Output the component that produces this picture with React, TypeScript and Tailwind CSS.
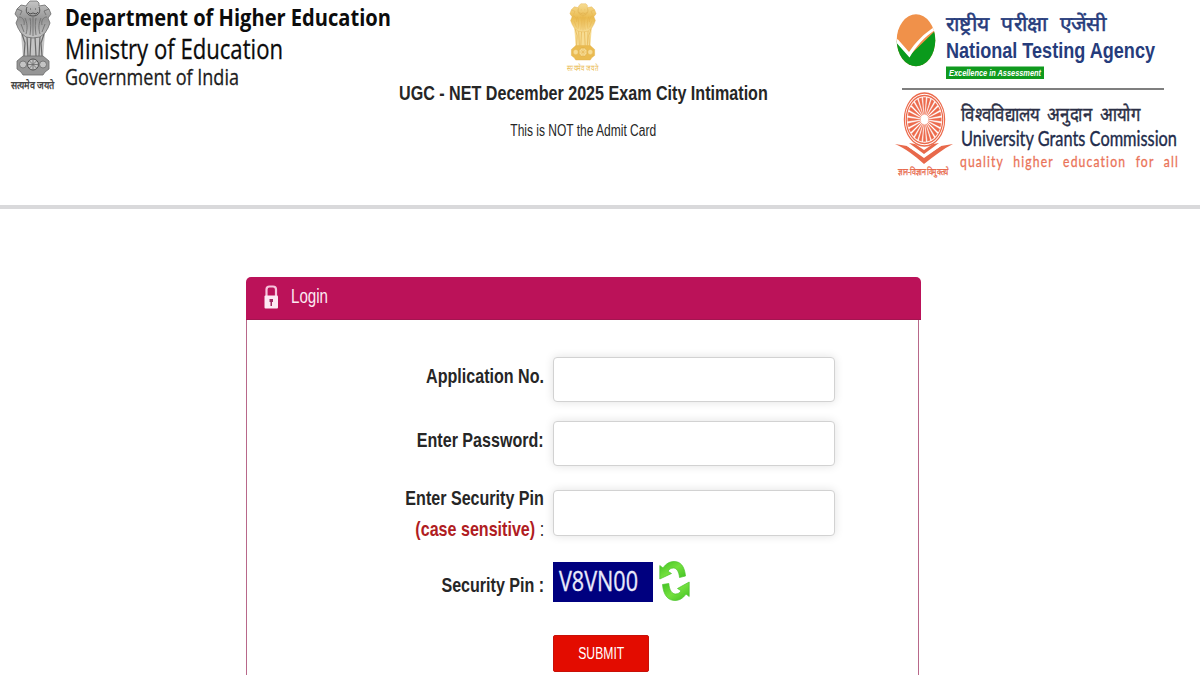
import type { ReactNode } from "react";

type EmblemProps = {
    id: string;
    line: string;
    light: string;
    mid: string;
    dark: string;
    className: string;
    soft?: boolean;
};

const Emblem = ({ id, line, light, mid, dark, className, soft }: EmblemProps) => (
    <svg viewBox="0 0 44 92" preserveAspectRatio="none" className={`overflow-visible ${className}`}>
        <defs>
            <linearGradient id={id} x1="0" y1="0" x2="0" y2="1">
                <stop offset="0" stopColor={light} />
                <stop offset="0.5" stopColor={mid} />
                <stop offset="1" stopColor={light} />
            </linearGradient>
        </defs>
        <g stroke={line} strokeWidth={soft ? 0.5 : 0.8} fill={`url(#${id})`} strokeLinejoin="round">
            {/* legs */}
            <path d="M10 33h24l-2 25H12z" fill={light} stroke="none" />
            <path d="M11 34l3 9-1 13M16 36l1 20M20 37l-1 19M24 37l1 19M29 36l-1 20M33 34l-3 9 1 13" fill="none" strokeWidth={soft ? 0.8 : 1.2} />
            {/* lions */}
            <path d="M17 3l2-2h7l2 2v3l6-1 4 4 2 5-3 4 2 5-2 5-3 5-5 4-7 1-7-1-5-4-3-5-2-5 2-5-3-4 2-5 4-4 5 1z" />
            <path d="M16 7c-2 4 0 9 6 9s8-5 6-9M17 12l2 2 3-1 3 1 2-2M19 9h1M24 9h1" fill="none" stroke={dark} />
            <path d="M6 9l5 2-2 4M38 9l-5 2 2 4M8 17c4 0 6 4 5 8M36 17c-4 0-6 4-5 8M14 18c2 5 3 9 1 16M30 18c-2 5-3 9-1 16M19 18c1 4 1 10 0 17M25 18c-1 4-1 10 0 17M22 17v19M10 24l3 8M34 24l-3 8" fill="none" />
            {/* abacus with the wheel */}
            <path d="M12 56h20l6 5v8l-4 3-2 3H12l-2-3-4-3v-8z" fill={mid} />
            <circle cx="22" cy="64.500" r="5.500" fill={light} stroke={dark} />
            <path d="M22 59v11M16.500 64.500h11M18.200 60.700l7.600 7.600M25.800 60.700l-7.600 7.600" fill="none" />
            <circle cx="12" cy="64.500" r="3.500" fill={light} />
            <circle cx="32" cy="64.500" r="3.500" fill={light} />
        </g>
        <text x="0" y="89" textLength="43" lengthAdjust="spacingAndGlyphs" fontSize="11" fontWeight={soft ? 400 : 700} fill={soft ? mid : "#444"}>
            सत्यमेव जयते
        </text>
    </svg>
);

const MinistryLogo = () => (
    <div className="flex w-[395px]">
        <Emblem id="emblemGray" line="#6a6a6a" light="#c4c4c4" mid="#969696" dark="#3d3d3d" className="ml-[11px] h-[92px] w-[44px] shrink-0" />
        <svg width="330" height="95" className="ml-[10px] shrink-0 overflow-visible font-['Open_Sans',sans-serif]" fill="#0c0c0c">
            <text x="0" y="26" fontSize="24" fontWeight="700" textLength="326" lengthAdjust="spacingAndGlyphs">
                Department of Higher Education
            </text>
            <text x="0" y="58.500" fontSize="28" stroke="#0c0c0c" strokeWidth="0.300" textLength="218" lengthAdjust="spacingAndGlyphs">
                Ministry of Education
            </text>
            <text x="0" y="85" fontSize="22.500" fill="#1c1c1c" stroke="#1c1c1c" strokeWidth="0.300" textLength="174" lengthAdjust="spacingAndGlyphs">
                Government of India
            </text>
        </svg>
    </div>
);

const TestingAgencyLogo = () => (
    <svg width="300" height="90" className="block overflow-visible font-['Liberation_Sans',sans-serif]">
        <defs>
            <clipPath id="ntaOval">
                <ellipse cx="26" cy="40.300" rx="19.300" ry="26" />
            </clipPath>
        </defs>
        <g clipPath="url(#ntaOval)">
            <rect x="5" y="12" width="44" height="56" fill="#f0914a" />
            <path d="M5 39l14 17 28-27v45H5z" fill="#0a9a1c" />
            <path d="M4 38.500l4 1 11 12.500c6-9 14-18 27-26l1 2.500C35 36 26 46 19.500 57.500L5 41z" fill="#fff" />
        </g>
        <g fill="#263c7c">
            <text x="56" y="31" fontSize="20.500" fontWeight="500" stroke="#263c7c" strokeWidth="0.500" wordSpacing="6" textLength="160" lengthAdjust="spacingAndGlyphs">
                राष्ट्रीय परीक्षा एजेंसी
            </text>
            <text x="56" y="58" fontSize="22.500" fontWeight="700" textLength="209" lengthAdjust="spacingAndGlyphs">
                National Testing Agency
            </text>
        </g>
        <rect x="56" y="66.500" width="98" height="12.500" fill="#0f9a1e" />
        <text x="59" y="76" fontSize="9.500" fontWeight="700" fontStyle="italic" fill="#fff" textLength="92" lengthAdjust="spacingAndGlyphs">
            Excellence in Assessment
        </text>
        <path d="M12 89h262" stroke="#555" strokeWidth="1.500" />
    </svg>
);

const rays = Array.from({ length: 24 }, (_, i) => i * 15);

const GrantsCommissionLogo = () => (
    <svg width="300" height="95" className="block overflow-visible font-['Lato',sans-serif]">
        <g transform="translate(34.500 29.500) scale(0.76 1)" fill="none" stroke="#ec6a4c">
            <circle r="26.500" strokeWidth="1.500" />
            <circle r="24" strokeWidth="1.600" />
            {rays.map((angle) => (
                <path key={angle} d="M0 -5L1.800 -22H-1.800z" transform={`rotate(${angle})`} fill="#ec6a4c" strokeWidth="0.400" />
            ))}
        </g>
        <g fill="#e8694b">
            <path d="M5 54l12 2 17 12 17-12 12-2c-10 5-19 12-29 20C25 66 15 58 5 54z" />
            <path d="M17 55.500l17 11 17-11" fill="none" stroke="#fff" strokeWidth="1" />
            <path d="M19 53l6 1 9 6 9-6 6-1-15 11z" />
        </g>
        <text x="8" y="84.500" fontSize="9.500" fontWeight="500" fill="#e8694b" stroke="#e8694b" strokeWidth="0.300" textLength="51" lengthAdjust="spacingAndGlyphs">
            ज्ञान-विज्ञान विमुक्तये
        </text>
        <text x="71" y="31" fontSize="19.500" fontWeight="500" fill="#2b2f45" stroke="#2b2f45" strokeWidth="0.400" wordSpacing="4" textLength="179" lengthAdjust="spacingAndGlyphs">
            विश्वविद्यालय अनुदान आयोग
        </text>
        <text x="71" y="56" fontSize="22" fill="#222c4c" stroke="#222c4c" strokeWidth="0.400" textLength="216" lengthAdjust="spacingAndGlyphs">
            University Grants Commission
        </text>
        <text x="70" y="77" fontSize="16" fill="#ea7358" stroke="#ea7358" strokeWidth="0.300" letterSpacing="1.500" wordSpacing="7" textLength="219" lengthAdjust="spacingAndGlyphs">
            quality higher education for all
        </text>
    </svg>
);

const LockIcon = () => (
    <svg width="15" height="24" viewBox="0 0 15 24" className="-mt-[3px]">
        <path d="M2.500 11V4.500Q2.500 1.500 5.500 1.500h3.500q3 0 3 3V11" fill="none" stroke="#f7c3dc" strokeWidth="2.200" />
        <rect x="0.500" y="10.500" width="13.500" height="13" rx="1" fill="#fdeaf4" />
        <path d="M5.500 14h3.500v3H8v4H6.500v-4h-1z" fill="#a02a63" />
    </svg>
);

const RefreshIcon = () => (
    <svg width="31" height="40" viewBox="0 0 31 40">
        <defs>
            <linearGradient id="refreshGreen" x1="0" y1="0" x2="1" y2="1">
                <stop offset="0" stopColor="#3fc022" />
                <stop offset="0.500" stopColor="#74e03e" />
                <stop offset="1" stopColor="#3fc022" />
            </linearGradient>
        </defs>
        <g fill="url(#refreshGreen)" stroke="#4cc42c" strokeWidth="0.700" strokeLinejoin="round">
            <path d="M.8 4.500L4 7C7 2.500 11 .5 15 .5c6.500 0 10.500 4.500 11.500 14.500L20.500 16.500C20 10.500 17.500 7 14.500 7c-2.500 0-4.500 1.200-5.500 3.300l3.500 2.200L.8 18z" />
            <path d="M30.200 35.500L27 33c-3 4.500-7 6.500-11 6.500C9.500 39.500 4.500 35 3.500 23.500L9.800 22.500c.5 6.500 3.200 10.500 6.700 10.500 2.500 0 4.500-1.200 5.500-3.300l-3.500-2.200L30.200 21z" />
        </g>
    </svg>
);

const Label = ({ children }: { children: ReactNode }) => (
    <span className="inline-block origin-right scale-x-[0.766] whitespace-nowrap text-[21px] leading-[31px] font-bold text-[#262626]">
        {children}
    </span>
);

const Field = ({ type = "text" }: { type?: string }) => (
    <input
        type={type}
        className="block w-[282px] rounded-[4px] border border-[#d2d2d2] bg-white px-3 shadow-[0_0_10px_rgba(0,0,0,0.12)] outline-none"
    />
);

const Row = ({ label, children, className }: { label?: ReactNode; children: ReactNode; className: string }) => (
    <div className={`flex gap-[9px] ${className}`}>
        <div className="flex w-[297px] shrink-0 flex-col items-end">{label}</div>
        {children}
    </div>
);

const App = () => {
    return (
        <div className="h-[675px] w-[1200px] overflow-hidden bg-white font-['Liberation_Sans',Arial,sans-serif]">
            <header className="flex h-[209px] border-b-4 border-[#d9d9db]">
                <MinistryLogo />
                <div className="flex w-[376px] flex-col items-center">
                    <Emblem
                        id="emblemGold"
                        line="#e0ac45"
                        light="#f7dc92"
                        mid="#eabb50"
                        dark="#d49c3a"
                        soft
                        className="mt-[3px] h-[70px] w-[32px]"
                    />
                    <h1 className="mt-[5px] scale-x-[0.767] whitespace-nowrap text-[21px] leading-[30px] font-bold text-[#262626]">
                        UGC - NET December 2025 Exam City Intimation
                    </h1>
                    <p className="mt-[11px] scale-x-[0.75] whitespace-nowrap text-[16px] leading-[24px] text-[#262626]">This is NOT the Admit Card</p>
                </div>
                <div className="ml-auto w-[310px]">
                    <TestingAgencyLogo />
                    <GrantsCommissionLogo />
                </div>
            </header>

            <main className="mt-[68px] ml-[246px] w-[675px]">
                <div className="flex h-[43px] items-center rounded-t-[5px] border-b border-[#a31550] bg-[#bb1259] pl-[18px]">
                    <LockIcon />
                    <h2 className="-mt-[4px] ml-[12px] origin-left scale-x-[0.757] text-[20px] leading-[24px] text-[#fdeaf3]">Login</h2>
                </div>
                <form className="mr-[2px] h-[400px] border-x border-[#b8688a] pt-[37px]">
                    <Row className="h-[45px]" label={<div className="pt-[3px]"><Label>Application No.</Label></div>}>
                        <Field />
                    </Row>
                    <Row className="mt-[19px] h-[45px]" label={<div className="pt-[3px]"><Label>Enter Password:</Label></div>}>
                        <Field type="password" />
                    </Row>
                    <Row
                        className="mt-[24px] h-[46px]"
                        label={
                            <div className="-mt-[8px] flex flex-col items-end">
                                <Label>Enter Security Pin</Label>
                                <Label>
                                    <span className="text-[#b01c22]">(case sensitive)</span> <span className="font-normal">:</span>
                                </Label>
                            </div>
                        }
                    >
                        <Field />
                    </Row>
                    <Row className="mt-[25px] h-[41px]" label={<div className="pt-[8px]"><Label>Security Pin :</Label></div>}>
                        <div className="mt-px flex">
                            <div className="flex h-[40px] w-[100px] items-center bg-[#00007f] pl-[6px]">
                                <svg width="80" height="30" className="overflow-visible font-['Open_Sans',sans-serif]">
                                    <text x="0" y="24" fontSize="26.500" fill="#e9e9fb" stroke="#e9e9fb" strokeWidth="0.300" textLength="79" lengthAdjust="spacingAndGlyphs">
                                        V8VN00
                                    </text>
                                </svg>
                            </div>
                            <button type="button" aria-label="Refresh" className="-mt-[2px] ml-[6px]">
                                <RefreshIcon />
                            </button>
                        </div>
                    </Row>
                    <Row className="mt-[33px] h-[37px]">
                        <button type="submit" className="w-[96px] rounded-[2px] border border-[#c81008] bg-[#e30c00] text-[16px] text-white">
                            <span className="inline-block scale-x-[0.76]">SUBMIT</span>
                        </button>
                    </Row>
                </form>
            </main>
        </div>
    );
};

export default App;
